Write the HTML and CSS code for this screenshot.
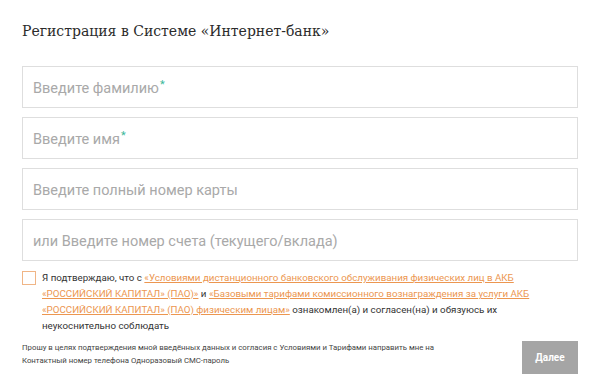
FILE: index.html
```html
<!DOCTYPE html>
<html lang="ru">
<head>
    <meta charset="UTF-8">
    <meta name="viewport" content="width=device-width, initial-scale=1.0">
    <title>Регистрация в Системе «Интернет-банк»</title>
    <link rel="stylesheet" href="styles.css">
</head>
<body>

    <div class="reg">
        <h1 class="reg-title">Регистрация в Системе «Интернет-банк»</h1>

        <div class="fields">
            <div class="field"><span class="ph">Введите фамилию<i>*</i></span></div>
            <div class="field"><span class="ph">Введите имя<i>*</i></span></div>
            <div class="field"><span class="ph">Введите полный номер карты</span></div>
            <div class="field"><span class="ph">или Введите номер счета (текущего/вклада)</span></div>
        </div>

        <label class="agree">
            <span class="check"></span>
            <span class="agree-text">Я подтверждаю, что с <a href="#">«Условиями дистанционного банковского обслуживания физических лиц в АКБ «РОССИЙСКИЙ КАПИТАЛ» (ПАО)»</a> и <a href="#">«Базовыми тарифами комиссионного вознаграждения за услуги АКБ «РОССИЙСКИЙ КАПИТАЛ» (ПАО) физическим лицам»</a> ознакомлен(а) и согласен(на) и обязуюсь их неукоснительно соблюдать</span>
        </label>

        <div class="bottom">
            <p class="note">Прошу в целях подтверждения мной введённых данных и согласия с Условиями и Тарифами направить мне на Контактный номер телефона Одноразовый СМС-пароль</p>
            <button class="next" disabled>Далее</button>
        </div>
    </div>

</body>
</html>
```

FILE: styles.css
```css
body {
    margin: 0;
    background-color: #fff;
    font-family: Roboto, Arial, sans-serif;
    color: #333;
}

.reg {
    padding: 20px 22px 0 22px;
}

.reg-title {
    margin: 0 0 24px 0;
    font-family: "DejaVu Serif", serif;
    font-weight: normal;
    font-size: 14px;
    line-height: 22px;
    color: #2b2b2b;
}

.fields {
    display: flex;
    flex-direction: column;
    gap: 9px;
}

.field {
    height: 40px;
    border: 1px solid #dedede;
    display: flex;
    align-items: center;
    padding: 0 10px;
}

.ph {
    font-size: 14.5px;
    color: #a9a9a9;
    position: relative;
    top: 1px;
}

.ph i {
    font-style: normal;
    color: #3cb89a;
    font-size: 11px;
    vertical-align: top;
    position: relative;
    top: -2px;
    margin-left: 1px;
}

.agree {
    display: flex;
    align-items: flex-start;
    margin-top: 9px;
    gap: 6px;
}

.check {
    flex: none;
    width: 12px;
    height: 12px;
    border: 1px solid #f0b586;
    margin-top: 1px;
}

.agree-text {
    font-size: 9.75px;
    line-height: 16px;
    color: #333;
    padding-right: 40px;
}

.agree-text a {
    color: #ec9650;
    text-decoration: underline;
}

.bottom {
    display: flex;
    align-items: flex-start;
    justify-content: space-between;
    margin-top: 7px;
}

.note {
    margin: 0;
    font-size: 7.8px;
    line-height: 13px;
    color: #444;
    width: 440px;
}

.next {
    width: 56px;
    height: 33px;
    border: none;
    background-color: #a5a5a5;
    color: #fff;
    font-family: Roboto, Arial, sans-serif;
    font-weight: bold;
    font-size: 10px;
    padding: 0;
}
```
